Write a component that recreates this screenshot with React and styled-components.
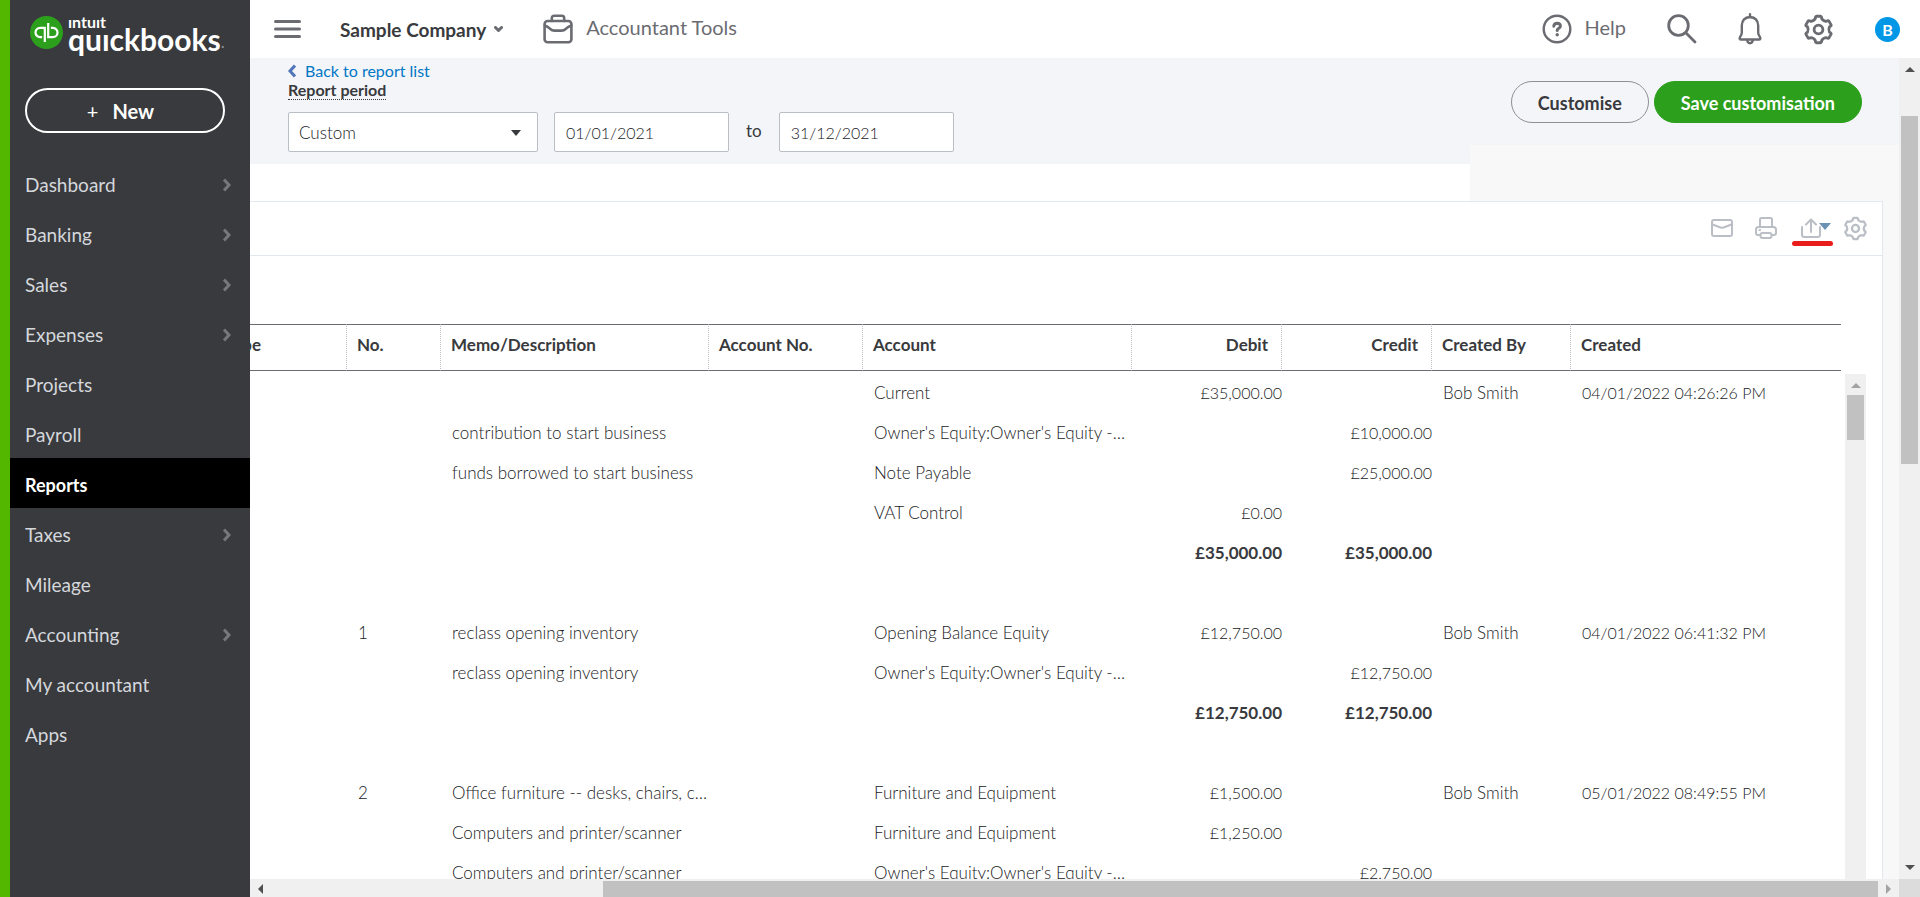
import React, { useState } from "react";
import styled, { createGlobalStyle } from "styled-components";

const menuItems = [
  { label: "Dashboard", hasSub: true },
  { label: "Banking", hasSub: true },
  { label: "Sales", hasSub: true },
  { label: "Expenses", hasSub: true },
  { label: "Projects" },
  { label: "Payroll" },
  { label: "Reports" },
  { label: "Taxes", hasSub: true },
  { label: "Mileage" },
  { label: "Accounting", hasSub: true },
  { label: "My accountant" },
  { label: "Apps" },
];

const rows = [
  { account: "Current", debit: "£35,000.00", by: "Bob Smith", created: "04/01/2022 04:26:26 PM" },
  { memo: "contribution to start business", account: "Owner's Equity:Owner's Equity -…", credit: "£10,000.00" },
  { memo: "funds borrowed to start business", account: "Note Payable", credit: "£25,000.00" },
  { account: "VAT Control", debit: "£0.00" },
  { debit: "£35,000.00", credit: "£35,000.00", total: true },
  {},
  { no: "1", memo: "reclass opening inventory", account: "Opening Balance Equity", debit: "£12,750.00", by: "Bob Smith", created: "04/01/2022 06:41:32 PM" },
  { memo: "reclass opening inventory", account: "Owner's Equity:Owner's Equity -…", credit: "£12,750.00" },
  { debit: "£12,750.00", credit: "£12,750.00", total: true },
  {},
  { no: "2", memo: "Office furniture -- desks, chairs, c…", account: "Furniture and Equipment", debit: "£1,500.00", by: "Bob Smith", created: "05/01/2022 08:49:55 PM" },
  { memo: "Computers and printer/scanner", account: "Furniture and Equipment", debit: "£1,250.00" },
  { memo: "Computers and printer/scanner", account: "Owner's Equity:Owner's Equity -…", credit: "£2,750.00" },
];

// Six-toothed outline centred on 12,12
const gearPath = () => {
  const point = (radius, deg) => {
    const a = (deg * Math.PI) / 180;
    return `${(12 + radius * Math.cos(a)).toFixed(2)} ${(12 + radius * Math.sin(a)).toFixed(2)}`;
  };
  let d = "";
  for (let i = 0; i < 6; i++) {
    const a = i * 60 - 90;
    d += `${i ? "L" : "M"}${point(8.8, a - 16)} Q${point(10.4, a - 14)} ${point(10.4, a - 10)}`;
    d += ` L${point(10.4, a + 10)} Q${point(10.4, a + 14)} ${point(8.8, a + 16)}`;
    d += ` Q${point(7.4, a + 30)} ${point(8.8, a + 44)}`;
  }
  return d + "Z";
};

const GearIcon = ({ size, stroke }) => (
  <Icon width={size} height={size} viewBox="0 0 24 24" strokeWidth={stroke}>
    <path d={gearPath()} />
    <circle cx="12" cy="12" r="3.4" />
  </Icon>
);

const Chevron = ({ color, left }) => (
  <Icon width="8" height="14" viewBox="0 0 8 14" strokeWidth="3" color={color}>
    <path
      d={left ? "M7 1.5 2 7l5 5.5" : "M1 1.5 6 7l-5 5.5"}
      strokeLinecap="butt"
      strokeLinejoin="miter"
    />
  </Icon>
);

const Sidebar = () => (
  <Side>
    <Logo href="#home" aria-label="Intuit QuickBooks">
      <svg width="33" height="33" viewBox="-16.5 -16.5 33 33">
        <circle r="16.5" fill="#2ca01c" />
        <g fill="none" stroke="#fff" strokeWidth="2.2">
          <path d="M-1.7 9.5V-4.6H-6.4a4.6 4.6 0 0 0 0 9.2h2" />
          <path d="M1.7 -9.5V4.6H6.4a4.6 4.6 0 0 0 0 -9.2h-2" />
        </g>
      </svg>
      <Wordmark>
        <small>ıntuıt</small>
        <strong>quıckbooks</strong>
      </Wordmark>
      <Dot>.</Dot>
    </Logo>
    <NewButton>
      <Plus>+</Plus>
      New
    </NewButton>
    <nav>
      {menuItems.map((item) => (
        <MenuLink key={item.label} href="#menu" $active={item.label === "Reports"}>
          {item.label}
          {item.hasSub && <Chevron color="#77787d" />}
        </MenuLink>
      ))}
    </nav>
  </Side>
);

const Header = () => (
  <TopBar>
    <IconButton aria-label="Toggle menu">
      <Icon width="27" height="18" viewBox="0 0 27 18" strokeWidth="3">
        <path d="M1.5 1.5h24M1.5 9h24M1.5 16.5h24" />
      </Icon>
    </IconButton>
    <Company>
      Sample Company
      <Icon width="9" height="7" viewBox="0 0 9 7" strokeWidth="3">
        <path d="M1.5 1.5 4.5 4.5l3-3" />
      </Icon>
    </Company>
    <HeaderButton>
      <Icon width="30" height="30" viewBox="0 0 30 30" strokeWidth="2.6">
        <rect x="1.6" y="7" width="26.8" height="21.2" rx="3" />
        <path d="M8.8 7V4.2q0-2.4 2.4-2.4h7.6q2.4 0 2.4 2.4V7" />
        <path d="M1.8 11.5q3 1 5.2 3.2 2 1.9 4.6 1.9h6.8q2.6 0 4.6-1.9 2.2-2.2 5.2-3.2" />
      </Icon>
      <HeaderLabel>Accountant Tools</HeaderLabel>
    </HeaderButton>
    <Spacer />
    <Tools>
      <HeaderButton>
        <Icon width="30" height="30" viewBox="0 0 30 30" strokeWidth="2.4">
          <circle cx="15" cy="15" r="13.3" />
          <path d="M11.8 12.2q.3-3 3.4-3 3.2.2 3.2 2.7 0 1.6-1.7 2.4-1.5.7-1.5 2.2" strokeWidth="3" />
          <circle cx="15.200" cy="20.800" r="1.700" fill="currentColor" stroke="none" />
        </Icon>
        <HeaderLabel>Help</HeaderLabel>
      </HeaderButton>
      <IconButton aria-label="Search">
        <Icon width="30" height="30" viewBox="0 0 30 30" strokeWidth="2.8">
          <circle cx="11.5" cy="11.5" r="9.8" />
          <path d="M18.8 18.8 28 28" />
        </Icon>
      </IconButton>
      <IconButton aria-label="Notifications">
        <Icon width="24" height="32" viewBox="0 0 24 32" strokeWidth="2.4">
          <path d="M12 1.2v2.6M12 4q-7.8.6-8.2 8.5v7q0 2.3-1.6 4.2-1.4 2.700.600 2.800h18.400q2-.100.600-2.800-1.600-1.900-1.600-4.200v-7Q19.800 4.600 12 4z" />
          <path d="M9.2 27.2q.3 3 2.8 3t2.8-3" />
        </Icon>
      </IconButton>
      <IconButton aria-label="Settings">
        <GearIcon size={31} stroke={2.2} />
      </IconButton>
      <Avatar aria-label="Account">B</Avatar>
    </Tools>
  </TopBar>
);

const ReportFilters = () => {
  const [period, setPeriod] = useState("Custom");
  const [from, setFrom] = useState("01/01/2021");
  const [to, setTo] = useState("31/12/2021");

  return (
    <FilterBand>
      <Filters>
        <BackLink href="#reports">
          <Chevron color="#4f74b8" left />
          Back to report list
        </BackLink>
        <PeriodLabel htmlFor="period">Report period</PeriodLabel>
        <Fields>
          <SelectBox>
            <Select id="period" value={period} onChange={(e) => setPeriod(e.target.value)}>
              <option>Custom</option>
              <option>This Month</option>
              <option>This Year</option>
            </Select>
            <SelectArrow />
          </SelectBox>
          <DateInput id="from" aria-label="From date" value={from} onChange={(e) => setFrom(e.target.value)} />
          <ToLabel htmlFor="to">to</ToLabel>
          <DateInput id="to" value={to} onChange={(e) => setTo(e.target.value)} />
        </Fields>
      </Filters>
      <Actions>
        <PillButton>Customise</PillButton>
        <PillButton $primary>Save customisation</PillButton>
      </Actions>
    </FilterBand>
  );
};

const ReportToolbar = () => (
  <ReportBar>
    <IconButton aria-label="Email">
      <Icon width="22" height="18" viewBox="0 0 22 18" strokeWidth="2">
        <rect x="1" y="1" width="20" height="16" rx="2" />
        <path d="M1.5 5.5 9.500 8.500q1.500.600 3 0l8-3" />
      </Icon>
    </IconButton>
    <IconButton aria-label="Print">
      <Icon width="22" height="22" viewBox="0 0 22 22" strokeWidth="2">
        <path d="M5 10V2.5Q5 1 6.5 1h9Q17 1 17 2.5V10M5 18H3q-2 0-2-2v-3.5Q1 10 3.5 10h15q2.5 0 2.5 2.5V16q0 2-2 2h-2" />
        <rect x="5.5" y="16" width="11" height="5" rx="2" />
        <path d="M4.5 13h.6" />
      </Icon>
    </IconButton>
    <ExportButton aria-label="Export">
      <Icon width="32" height="20" viewBox="0 0 32 20" strokeWidth="2">
        <path d="M1 9v7.5Q1 19 3.5 19h13Q19 19 19 16.500V9M10 14V2M5 6.500 10 1.500l5 5" />
        <path d="M18 5h12l-6 7z" fill="#6b91b3" stroke="none" />
      </Icon>
    </ExportButton>
    <IconButton aria-label="Report settings">
      <GearIcon size={25} stroke={2.2} />
    </IconButton>
  </ReportBar>
);

const ReportTable = () => (
  <Table>
    <colgroup>
      <col width="97" />
      <col width="94" />
      <col width="268" />
      <col width="154" />
      <col width="269" />
      <col width="150" />
      <col width="150" />
      <col width="139" />
      <col />
    </colgroup>
    <thead>
      <tr>
        <Th>
          <Clipped>Transaction Type</Clipped>
        </Th>
        <Th>No.</Th>
        <Th>Memo/Description</Th>
        <Th>Account No.</Th>
        <Th>Account</Th>
        <Th $amount>Debit</Th>
        <Th $amount>Credit</Th>
        <Th>Created By</Th>
        <Th>Created</Th>
      </tr>
    </thead>
    <tbody>
      {rows.map((row, i) => (
        <tr key={i}>
          <Td />
          <Td>{row.no}</Td>
          <Td>{row.memo}</Td>
          <Td />
          <Td>{row.account}</Td>
          <Amount $total={row.total}>{row.debit}</Amount>
          <Amount $total={row.total}>{row.credit}</Amount>
          <Td>{row.by}</Td>
          <DateCell>{row.created}</DateCell>
        </tr>
      ))}
    </tbody>
  </Table>
);

const App = () => (
  <Page>
    <GlobalStyle />
    <Sidebar />
    <Main>
      <Header />
      <ScrollArea>
        <Content>
          <ReportFilters />
          <Strip />
          <Report>
            <ReportToolbar />
            <ReportBody>
              <ReportTable />
              <InnerTrack>
                <Arrow $dir="up" $muted />
                <InnerThumb />
              </InnerTrack>
            </ReportBody>
          </Report>
        </Content>
        <PageTrack>
          <Arrow $dir="up" />
          <PageThumb />
          <Spacer />
          <Arrow $dir="down" />
        </PageTrack>
        <BottomTrack>
          <Arrow $dir="left" />
          <BottomThumb />
          <Arrow $dir="right" $muted />
        </BottomTrack>
        <Corner />
      </ScrollArea>
    </Main>
  </Page>
);

const GlobalStyle = createGlobalStyle`
  * {
    box-sizing: border-box;
  }
  body {
    margin: 0;
    overflow: hidden;
    color: #393a3d;
    font-family: Lato, "Liberation Sans", sans-serif;
    font-size: 17px;
  }
  button, input, select {
    font: inherit;
    color: inherit;
  }
  button {
    padding: 0;
    border: 0;
    background: none;
    cursor: pointer;
  }
  a {
    text-decoration: none;
  }
`;

const Page = styled.div`
  display: flex;
  height: 100vh;
`;

const Icon = styled.svg`
  display: block;
  flex: none;
  fill: none;
  stroke: currentColor;
  stroke-linecap: round;
  stroke-linejoin: round;
  color: ${({ color }) => color || "inherit"};
`;

const Spacer = styled.div`
  flex: 1;
`;

// Sidebar
const Side = styled.aside`
  flex: none;
  width: 250px;
  border-left: 10px solid #53b700;
  background: #393a3d;
`;

const Logo = styled.a`
  display: flex;
  align-items: center;
  height: 64px;
  padding-left: 20px;
  color: #fff;
`;

const Wordmark = styled.span`
  display: flex;
  flex-direction: column;
  margin-left: 5px;

  small {
    font-size: 16px;
    font-weight: 700;
    line-height: 14px;
  }
  strong {
    font-size: 30px;
    line-height: 20px;
  }
`;

const Dot = styled.span`
  align-self: flex-end;
  color: #8d9096;
  line-height: 44px;
`;

const NewButton = styled.button`
  display: flex;
  align-items: center;
  justify-content: center;
  gap: 14px;
  width: 200px;
  height: 45px;
  margin: 24px 15px 25px;
  padding-right: 9px;
  border: 2px solid #fff;
  border-radius: 23px;
  color: #fff;
  font-size: 20px;
  font-weight: 700;
`;

const Plus = styled.span`
  font-weight: 400;
`;

const MenuLink = styled.a`
  display: flex;
  align-items: center;
  justify-content: space-between;
  height: 50px;
  padding: 3px 19px 0 15px;
  background: ${({ $active }) => ($active ? "#000" : "transparent")};
  color: ${({ $active }) => ($active ? "#fff" : "#d4d7dc")};
  font-size: ${({ $active }) => ($active ? "18px" : "19px")};
  font-weight: ${({ $active }) => ($active ? 700 : 400)};
`;

// Header
const Main = styled.main`
  display: flex;
  flex: 1;
  flex-direction: column;
  min-width: 0;
`;

const TopBar = styled.header`
  display: flex;
  flex: none;
  align-items: center;
  height: 58px;
  padding: 0 20px 0 24px;
  background: #fff;
  color: #6b6c72;
`;

const IconButton = styled.button`
  display: flex;
  align-items: center;
`;

const HeaderButton = styled(IconButton)`
  gap: 13px;
  font-size: 20px;
`;

const HeaderLabel = styled.span`
  padding-bottom: 4px;
`;

const Company = styled(IconButton)`
  gap: 8px;
  margin: 0 40px 0 39px;
  color: #393a3d;
  font-size: 19px;
  font-weight: 700;

  svg {
    color: #6b6c72;
  }
`;

const Tools = styled.div`
  display: flex;
  align-items: center;
  gap: 41px;
`;

const Avatar = styled.button`
  width: 25px;
  height: 25px;
  border-radius: 50%;
  background: #0097e6;
  color: #fff;
  font-size: 16px;
  font-weight: 700;
`;

// Scroll area and its bars
const ScrollArea = styled.div`
  display: grid;
  flex: 1;
  grid-template-columns: minmax(0, 1fr) 21px;
  grid-template-rows: minmax(0, 1fr) 18px;
  min-height: 0;
`;

const Content = styled.div`
  display: flex;
  flex-direction: column;
  overflow: hidden;
  background: #f8f8f8;
`;

const PageTrack = styled.div`
  display: flex;
  flex-direction: column;
  align-items: center;
  padding: 9px 0;
  background: #f0f0f0;
`;

const PageThumb = styled.div`
  width: 17px;
  height: 348px;
  margin-top: 44px;
  background: #c1c1c1;
`;

const BottomTrack = styled.div`
  display: flex;
  align-items: center;
  gap: 8px;
  padding: 2px 8px 0;
  background: #f0f0f0;
`;

const BottomThumb = styled.div`
  flex: 1;
  height: 16px;
  margin-left: 332px;
  background: #c1c1c1;
`;

const Corner = styled.div`
  background: #dcdcdc;
`;

const InnerTrack = styled.div`
  display: flex;
  flex: none;
  flex-direction: column;
  align-items: center;
  gap: 7px;
  width: 21px;
  margin: 50px 0 0 4px;
  padding-top: 9px;
  background: #f0f0f0;
`;

const InnerThumb = styled.div`
  width: 17px;
  height: 45px;
  background: #c1c1c1;
`;

const arrowSides = {
  up: "0 5px 5px",
  down: "5px 5px 0",
  left: "5px 5px 5px 0",
  right: "5px 0 5px 5px",
};

const arrowEdge = { up: "bottom", down: "top", left: "right", right: "left" };

const Arrow = styled.span`
  flex: none;
  width: 0;
  height: 0;
  border: solid transparent;
  border-width: ${({ $dir }) => arrowSides[$dir]};
  border-${({ $dir }) => arrowEdge[$dir]}-color: ${({ $muted }) => ($muted ? "#a3a3a3" : "#505050")};
`;

// Filters
const FilterBand = styled.section`
  display: flex;
  flex: none;
  justify-content: space-between;
  height: 106px;
  background: linear-gradient(#f8f8f8, #f8f8f8) right bottom / 429px 19px no-repeat #f4f5f9;
`;

const Filters = styled.div`
  padding: 3px 0 0 38px;
`;

const BackLink = styled.a`
  display: flex;
  align-items: center;
  gap: 9px;
  color: #0077c5;
  font-size: 16px;
  line-height: 20px;
`;

const PeriodLabel = styled.label`
  display: block;
  width: fit-content;
  border-bottom: 1px dotted #393a3d;
  font-size: 16px;
  font-weight: 700;
  line-height: 18px;
`;

const Fields = styled.div`
  display: flex;
  align-items: center;
  gap: 16px;
  margin-top: 12px;
`;

const SelectBox = styled.div`
  position: relative;
`;

const Select = styled.select`
  display: block;
  width: 250px;
  height: 40px;
  padding: 0 10px;
  border: 1px solid #babec5;
  border-radius: 2px;
  background: #fff;
  color: #202124;
  font-weight: 300;
  appearance: none;
`;

const SelectArrow = styled.span`
  position: absolute;
  top: 18px;
  right: 17px;
  border: solid transparent;
  border-width: 6px 5px 0;
  border-top-color: #393a3d;
  pointer-events: none;
`;

const DateInput = styled.input`
  width: 175px;
  height: 40px;
  padding: 0 11px;
  border: 1px solid #babec5;
  border-radius: 2px;
  background: #fff;
  color: #202124;
  font-size: 16px;
  font-weight: 300;
`;

const ToLabel = styled.label`
  padding: 0 1px 3px;
`;

const Actions = styled.div`
  display: flex;
  gap: 5px;
  padding: 23px 37px 0 0;
`;

const PillButton = styled.button`
  height: 42px;
  padding: 2px 26px 0;
  border: 1px solid ${({ $primary }) => ($primary ? "#2ca01c" : "#8d9096")};
  border-radius: 21px;
  background: ${({ $primary }) => ($primary ? "#2ca01c" : "transparent")};
  color: ${({ $primary }) => ($primary ? "#fff" : "#393a3d")};
  font-size: 18px;
  font-weight: 700;
`;

const Strip = styled.div`
  flex: none;
  height: 37px;
  margin-right: 429px;
  background: #fff;
`;

// Report
const Report = styled.section`
  display: flex;
  flex: 1;
  flex-direction: column;
  min-height: 0;
  margin-right: 16px;
  border: solid #e3e8ef;
  border-width: 1px 1px 0 0;
  background: #fff;
`;

const ReportBar = styled.div`
  display: flex;
  flex: none;
  align-items: center;
  justify-content: flex-end;
  gap: 22px;
  height: 54px;
  padding: 0 14px 1px 0;
  border-bottom: 1px solid #e3e8ef;
  color: #babec5;
`;

const ExportButton = styled(IconButton)`
  position: relative;
  margin: 0 -12px 0 2px;

  &::after {
    content: "";
    position: absolute;
    top: 23px;
    left: -9px;
    width: 41px;
    height: 5px;
    border-radius: 3px;
    background: #ea1d1d;
  }
`;

const ReportBody = styled.div`
  display: flex;
  flex: 1;
  min-height: 0;
  margin-top: 68px;
  padding-right: 16px;
  overflow: hidden;
`;

const Table = styled.table`
  flex: 1;
  align-self: flex-start;
  width: 100%;
  min-width: 0;
  table-layout: fixed;
  border-spacing: 0;
`;

const Th = styled.th`
  height: 47px;
  padding: 0 13px 6px 10px;
  border: solid #6b6c72;
  border-width: 1px 0;
  text-align: ${({ $amount }) => ($amount ? "right" : "left")};
  white-space: nowrap;

  &:not(:last-child) {
    border-right: 1px dotted #babec5;
  }
`;

const Clipped = styled.span`
  display: flex;
  justify-content: flex-end;
  margin-left: -10px;
  padding-right: 72px;
  overflow: hidden;
`;

const Td = styled.td`
  height: 40px;
  padding: 12px 0 0 11px;
  color: #202124;
  font-weight: 300;
  line-height: 20px;
  vertical-align: top;
  white-space: nowrap;
`;

const DateCell = styled(Td)`
  font-size: 16px;
`;

const Amount = styled(Td)`
  padding-left: 0;
  color: ${({ $total }) => ($total ? "#393a3d" : "#202124")};
  font-size: ${({ $total }) => ($total ? "17px" : "16px")};
  font-weight: ${({ $total }) => ($total ? 700 : 300)};
  text-align: right;
`;

export default App;
